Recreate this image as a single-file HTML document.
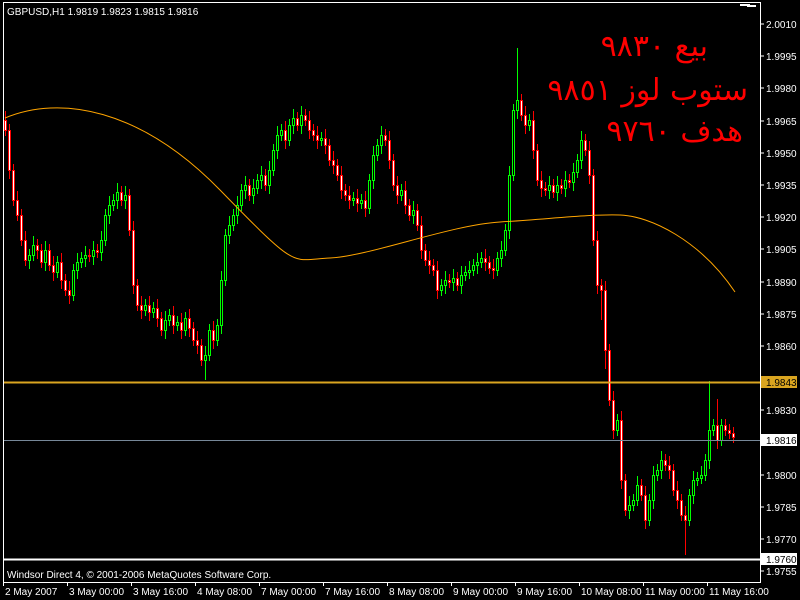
<!DOCTYPE html>
<html><head><meta charset="utf-8"><style>
html,body{margin:0;padding:0;background:#000;width:800px;height:600px;overflow:hidden}
svg{display:block}
.t{font-family:"Liberation Sans",sans-serif;font-size:10px;fill:#fff}
.k{font-family:"Liberation Sans",sans-serif;font-size:10px;fill:#000}
.ar{font-family:"DejaVu Sans","Liberation Serif",serif;font-size:30px;fill:#f00;direction:rtl}
</style></head><body>
<svg width="800" height="600" xmlns="http://www.w3.org/2000/svg">
<rect x="0" y="0" width="800" height="600" fill="#000"/>
<!-- red wicks -->
<path fill="none" stroke="#ff0000" stroke-width="1" d="M5.5 111V136M9.5 124V179M13.5 164V206M17.5 191V221M21.5 209V246M25.5 231V266M37.5 239V259M41.5 244V268M49.5 244V271M53.5 256V281M61.5 253V289M65.5 274V296M69.5 281V304M89.5 249V262M97.5 244V258M121.5 186V206M129.5 189V236M133.5 221V294M137.5 279V311M141.5 296V319M149.5 296V321M157.5 299V327M161.5 312V336M173.5 306V334M181.5 313V339M189.5 309V337M193.5 322V346M197.5 331V354M201.5 339V366M213.5 321V349M249.5 179V201M265.5 169V191M285.5 121V149M297.5 112V131M305.5 109V126M309.5 111V139M313.5 124V141M317.5 126V149M325.5 129V154M329.5 139V166M333.5 151V174M337.5 159V181M341.5 166V199M345.5 184V201M349.5 186V209M357.5 189V212M365.5 191V217M385.5 129V146M389.5 131V169M393.5 154V191M397.5 176V204M405.5 181V214M409.5 199V221M417.5 204V231M421.5 216V259M425.5 244V266M429.5 251V274M433.5 259V276M437.5 261V299M449.5 274V288M457.5 272V291M485.5 249V271M489.5 256V274M493.5 259V279M521.5 94V121M525.5 106V134M533.5 111V159M537.5 144V186M541.5 171V197M545.5 182V196M553.5 179V198M561.5 179V194M569.5 174V188M585.5 134V156M589.5 141V184M593.5 169V246M597.5 231V294M601.5 279V320M605.5 281V369M609.5 344V406M613.5 391V439M621.5 411V489M625.5 474V516M641.5 479V501M645.5 486V529M665.5 454V471M669.5 456V479M673.5 464V496M677.5 481V509M681.5 494V521M685.5 506V555M717.5 399V449M725.5 419V436M729.5 424V439M733.5 427V443"/>
<!-- green wicks -->
<path fill="none" stroke="#00ff00" stroke-width="1" d="M29.5 249V269M33.5 236V261M45.5 241V271M57.5 256V278M73.5 264V301M77.5 253V279M81.5 252V268M85.5 246V267M93.5 241V265M101.5 231V261M105.5 209V246M109.5 196V224M113.5 194V211M117.5 183V209M125.5 186V209M145.5 299V316M153.5 302V318M165.5 311V339M169.5 309V326M177.5 316V331M185.5 312V336M205.5 346V380M209.5 324V361M217.5 319V346M221.5 271V334M225.5 229V286M229.5 216V244M233.5 209V231M237.5 196V224M241.5 184V211M245.5 176V199M253.5 179V204M257.5 174V194M261.5 166V189M269.5 161V194M273.5 144V176M277.5 126V159M281.5 124V141M289.5 119V146M293.5 109V134M301.5 106V134M321.5 132V146M353.5 192V206M361.5 194V209M369.5 174V214M373.5 146V189M377.5 139V161M381.5 126V154M401.5 184V201M413.5 201V224M441.5 279V296M445.5 271V294M453.5 269V291M461.5 266V294M465.5 266V281M469.5 261V279M473.5 259V276M477.5 253V274M481.5 252V268M497.5 252V276M501.5 241V267M505.5 224V256M509.5 166V239M513.5 104V181M517.5 48V119M529.5 114V131M549.5 176V199M557.5 176V201M565.5 171V197M573.5 163V191M577.5 154V178M581.5 131V169M617.5 414V436M629.5 496V519M633.5 494V511M637.5 476V506M649.5 494V526M653.5 466V509M657.5 464V481M661.5 451V479M689.5 489V526M693.5 471V504M697.5 472V486M701.5 466V484M705.5 454V481M709.5 381V469M713.5 419V436M721.5 419V446"/>
<!-- red bodies -->
<path fill="#fff" stroke="#ff0000" stroke-width="1" d="M4.5 120.5h2v10h-2zM8.5 130.5h2v40h-2zM12.5 170.5h2v30h-2zM16.5 200.5h2v15h-2zM20.5 215.5h2v25h-2zM24.5 240.5h2v20h-2zM36.5 245.5h2v5h-2zM40.5 250.5h2v12h-2zM48.5 250.5h2v15h-2zM52.5 265.5h2v7h-2zM60.5 262.5h2v18h-2zM64.5 280.5h2v10h-2zM68.5 290.5h2v5h-2zM88.5 255.5h2v1h-2zM96.5 250.5h2v2h-2zM120.5 192.5h2v8h-2zM128.5 195.5h2v35h-2zM132.5 230.5h2v55h-2zM136.5 285.5h2v20h-2zM140.5 305.5h2v5h-2zM148.5 305.5h2v7h-2zM156.5 308.5h2v10h-2zM160.5 318.5h2v12h-2zM172.5 315.5h2v10h-2zM180.5 322.5h2v8h-2zM188.5 318.5h2v10h-2zM192.5 328.5h2v12h-2zM196.5 340.5h2v5h-2zM200.5 345.5h2v15h-2zM212.5 330.5h2v10h-2zM248.5 185.5h2v10h-2zM264.5 175.5h2v10h-2zM284.5 130.5h2v10h-2zM296.5 118.5h2v7h-2zM304.5 115.5h2v5h-2zM308.5 120.5h2v10h-2zM312.5 130.5h2v5h-2zM316.5 135.5h2v5h-2zM324.5 138.5h2v7h-2zM328.5 145.5h2v15h-2zM332.5 160.5h2v5h-2zM336.5 165.5h2v10h-2zM340.5 175.5h2v15h-2zM344.5 190.5h2v5h-2zM348.5 195.5h2v5h-2zM356.5 198.5h2v5h-2zM364.5 200.5h2v8h-2zM384.5 135.5h2v5h-2zM388.5 140.5h2v20h-2zM392.5 160.5h2v25h-2zM396.5 185.5h2v10h-2zM404.5 190.5h2v15h-2zM408.5 205.5h2v10h-2zM416.5 210.5h2v15h-2zM420.5 225.5h2v25h-2zM424.5 250.5h2v10h-2zM428.5 260.5h2v5h-2zM432.5 265.5h2v5h-2zM436.5 270.5h2v20h-2zM448.5 280.5h2v2h-2zM456.5 278.5h2v7h-2zM484.5 258.5h2v4h-2zM488.5 262.5h2v6h-2zM492.5 268.5h2v2h-2zM520.5 100.5h2v15h-2zM524.5 115.5h2v10h-2zM532.5 120.5h2v30h-2zM536.5 150.5h2v30h-2zM540.5 180.5h2v8h-2zM544.5 188.5h2v2h-2zM552.5 185.5h2v7h-2zM560.5 185.5h2v3h-2zM568.5 180.5h2v2h-2zM584.5 140.5h2v10h-2zM588.5 150.5h2v25h-2zM592.5 175.5h2v65h-2zM596.5 240.5h2v45h-2zM600.5 285.5h2v5h-2zM604.5 290.5h2v60h-2zM608.5 350.5h2v50h-2zM612.5 400.5h2v30h-2zM620.5 420.5h2v60h-2zM624.5 480.5h2v30h-2zM640.5 485.5h2v10h-2zM644.5 495.5h2v25h-2zM664.5 460.5h2v5h-2zM668.5 465.5h2v5h-2zM672.5 470.5h2v20h-2zM676.5 490.5h2v10h-2zM680.5 500.5h2v15h-2zM684.5 515.5h2v5h-2zM716.5 425.5h2v15h-2zM724.5 425.5h2v5h-2zM728.5 430.5h2v3h-2zM732.5 433.5h2v4h-2z"/>
<!-- green bodies -->
<path fill="#000" stroke="#00ff00" stroke-width="1" d="M28.5 255.5h2v5h-2zM32.5 245.5h2v10h-2zM44.5 250.5h2v12h-2zM56.5 262.5h2v10h-2zM72.5 270.5h2v25h-2zM76.5 262.5h2v8h-2zM80.5 258.5h2v4h-2zM84.5 255.5h2v3h-2zM92.5 250.5h2v6h-2zM100.5 240.5h2v12h-2zM104.5 215.5h2v25h-2zM108.5 205.5h2v10h-2zM112.5 200.5h2v5h-2zM116.5 192.5h2v8h-2zM124.5 195.5h2v5h-2zM144.5 305.5h2v5h-2zM152.5 308.5h2v4h-2zM164.5 320.5h2v10h-2zM168.5 315.5h2v5h-2zM176.5 322.5h2v3h-2zM184.5 318.5h2v12h-2zM204.5 355.5h2v5h-2zM208.5 330.5h2v25h-2zM216.5 325.5h2v15h-2zM220.5 280.5h2v45h-2zM224.5 235.5h2v45h-2zM228.5 225.5h2v10h-2zM232.5 215.5h2v10h-2zM236.5 205.5h2v10h-2zM240.5 190.5h2v15h-2zM244.5 185.5h2v5h-2zM252.5 188.5h2v7h-2zM256.5 180.5h2v8h-2zM260.5 175.5h2v5h-2zM268.5 170.5h2v15h-2zM272.5 150.5h2v20h-2zM276.5 135.5h2v15h-2zM280.5 130.5h2v5h-2zM288.5 125.5h2v15h-2zM292.5 118.5h2v7h-2zM300.5 115.5h2v10h-2zM320.5 138.5h2v2h-2zM352.5 198.5h2v2h-2zM360.5 200.5h2v3h-2zM368.5 180.5h2v28h-2zM372.5 155.5h2v25h-2zM376.5 145.5h2v10h-2zM380.5 135.5h2v10h-2zM400.5 190.5h2v5h-2zM412.5 210.5h2v5h-2zM440.5 285.5h2v5h-2zM444.5 280.5h2v5h-2zM452.5 278.5h2v4h-2zM460.5 275.5h2v10h-2zM464.5 272.5h2v3h-2zM468.5 270.5h2v2h-2zM472.5 265.5h2v5h-2zM476.5 262.5h2v3h-2zM480.5 258.5h2v4h-2zM496.5 258.5h2v12h-2zM500.5 250.5h2v8h-2zM504.5 230.5h2v20h-2zM508.5 175.5h2v55h-2zM512.5 110.5h2v65h-2zM516.5 100.5h2v10h-2zM528.5 120.5h2v5h-2zM548.5 185.5h2v5h-2zM556.5 185.5h2v7h-2zM564.5 180.5h2v8h-2zM572.5 172.5h2v10h-2zM576.5 160.5h2v12h-2zM580.5 140.5h2v20h-2zM616.5 420.5h2v10h-2zM628.5 505.5h2v5h-2zM632.5 500.5h2v5h-2zM636.5 485.5h2v15h-2zM648.5 500.5h2v20h-2zM652.5 475.5h2v25h-2zM656.5 470.5h2v5h-2zM660.5 460.5h2v10h-2zM688.5 495.5h2v25h-2zM692.5 480.5h2v15h-2zM696.5 478.5h2v2h-2zM700.5 475.5h2v3h-2zM704.5 460.5h2v15h-2zM708.5 430.5h2v30h-2zM712.5 425.5h2v5h-2zM720.5 425.5h2v15h-2z"/>
<path d="M5,118 C60,95 140,108 220,190 S290,260 330,258 S450,225 500,222 S590,214 620,215 S700,240 735,292" fill="none" stroke="#ffa500" stroke-width="1"/>
<line x1="3" y1="382.5" x2="760" y2="382.5" stroke="#daa520" stroke-width="2"/>
<line x1="3" y1="440.5" x2="760" y2="440.5" stroke="#778899" stroke-width="1"/>
<line x1="3" y1="559.5" x2="760" y2="559.5" stroke="#fff" stroke-width="2"/>
<rect x="3.5" y="2.5" width="757" height="580" fill="none" stroke="#fff" stroke-width="1"/>
<rect x="740" y="4" width="10" height="2" fill="#fff"/><rect x="747" y="5" width="9" height="2" fill="#fff"/>
<text class="t" x="7" y="15">GBPUSD,H1  1.9819 1.9823 1.9815 1.9816</text>
<text class="t" x="7" y="578">Windsor Direct 4, © 2001-2006 MetaQuotes Software Corp.</text>
<g stroke="#fff" stroke-width="1">
<line x1="760" y1="24" x2="764" y2="24"/><line x1="760" y1="56" x2="764" y2="56"/><line x1="760" y1="88" x2="764" y2="88"/><line x1="760" y1="121" x2="764" y2="121"/><line x1="760" y1="153" x2="764" y2="153"/><line x1="760" y1="185" x2="764" y2="185"/><line x1="760" y1="217" x2="764" y2="217"/><line x1="760" y1="249" x2="764" y2="249"/><line x1="760" y1="282" x2="764" y2="282"/><line x1="760" y1="314" x2="764" y2="314"/><line x1="760" y1="346" x2="764" y2="346"/><line x1="760" y1="410" x2="764" y2="410"/><line x1="760" y1="475" x2="764" y2="475"/><line x1="760" y1="507" x2="764" y2="507"/><line x1="760" y1="539" x2="764" y2="539"/><line x1="760" y1="571" x2="764" y2="571"/>
<line x1="3.5" y1="582" x2="3.5" y2="586"/><line x1="67.5" y1="582" x2="67.5" y2="586"/><line x1="131.5" y1="582" x2="131.5" y2="586"/><line x1="195.5" y1="582" x2="195.5" y2="586"/><line x1="259.5" y1="582" x2="259.5" y2="586"/><line x1="323.5" y1="582" x2="323.5" y2="586"/><line x1="387.5" y1="582" x2="387.5" y2="586"/><line x1="451.5" y1="582" x2="451.5" y2="586"/><line x1="515.5" y1="582" x2="515.5" y2="586"/><line x1="579.5" y1="582" x2="579.5" y2="586"/><line x1="643.5" y1="582" x2="643.5" y2="586"/><line x1="707.5" y1="582" x2="707.5" y2="586"/>
</g>
<text class="t" x="766" y="28">2.0010</text><text class="t" x="766" y="60">1.9995</text><text class="t" x="766" y="92">1.9980</text><text class="t" x="766" y="125">1.9965</text><text class="t" x="766" y="157">1.9950</text><text class="t" x="766" y="189">1.9935</text><text class="t" x="766" y="221">1.9920</text><text class="t" x="766" y="253">1.9905</text><text class="t" x="766" y="286">1.9890</text><text class="t" x="766" y="318">1.9875</text><text class="t" x="766" y="350">1.9860</text><text class="t" x="766" y="414">1.9830</text><text class="t" x="766" y="479">1.9800</text><text class="t" x="766" y="511">1.9785</text><text class="t" x="766" y="543">1.9770</text><text class="t" x="766" y="575">1.9755</text>
<rect x="761" y="376" width="36" height="12" fill="#daa520"/><text class="k" x="766" y="386">1.9843</text>
<rect x="761" y="434" width="36" height="12" fill="#fff"/><text class="k" x="766" y="444">1.9816</text>
<rect x="761" y="553" width="36" height="12" fill="#fff"/><text class="k" x="766" y="563">1.9760</text>
<text class="t" x="5" y="595">2 May 2007</text><text class="t" x="69" y="595">3 May 00:00</text><text class="t" x="133" y="595">3 May 16:00</text><text class="t" x="197" y="595">4 May 08:00</text><text class="t" x="261" y="595">7 May 00:00</text><text class="t" x="325" y="595">7 May 16:00</text><text class="t" x="389" y="595">8 May 08:00</text><text class="t" x="453" y="595">9 May 00:00</text><text class="t" x="517" y="595">9 May 16:00</text><text class="t" x="581" y="595">10 May 08:00</text><text class="t" x="645" y="595">11 May 00:00</text><text class="t" x="709" y="595">11 May 16:00</text>
<text class="ar" x="708" y="56">بيع ٩٨٣٠</text>
<text class="ar" x="748" y="100">ستوب لوز ٩٨٥١</text>
<text class="ar" x="743" y="141">هدف ٩٧٦٠</text>
</svg>
</body></html>
